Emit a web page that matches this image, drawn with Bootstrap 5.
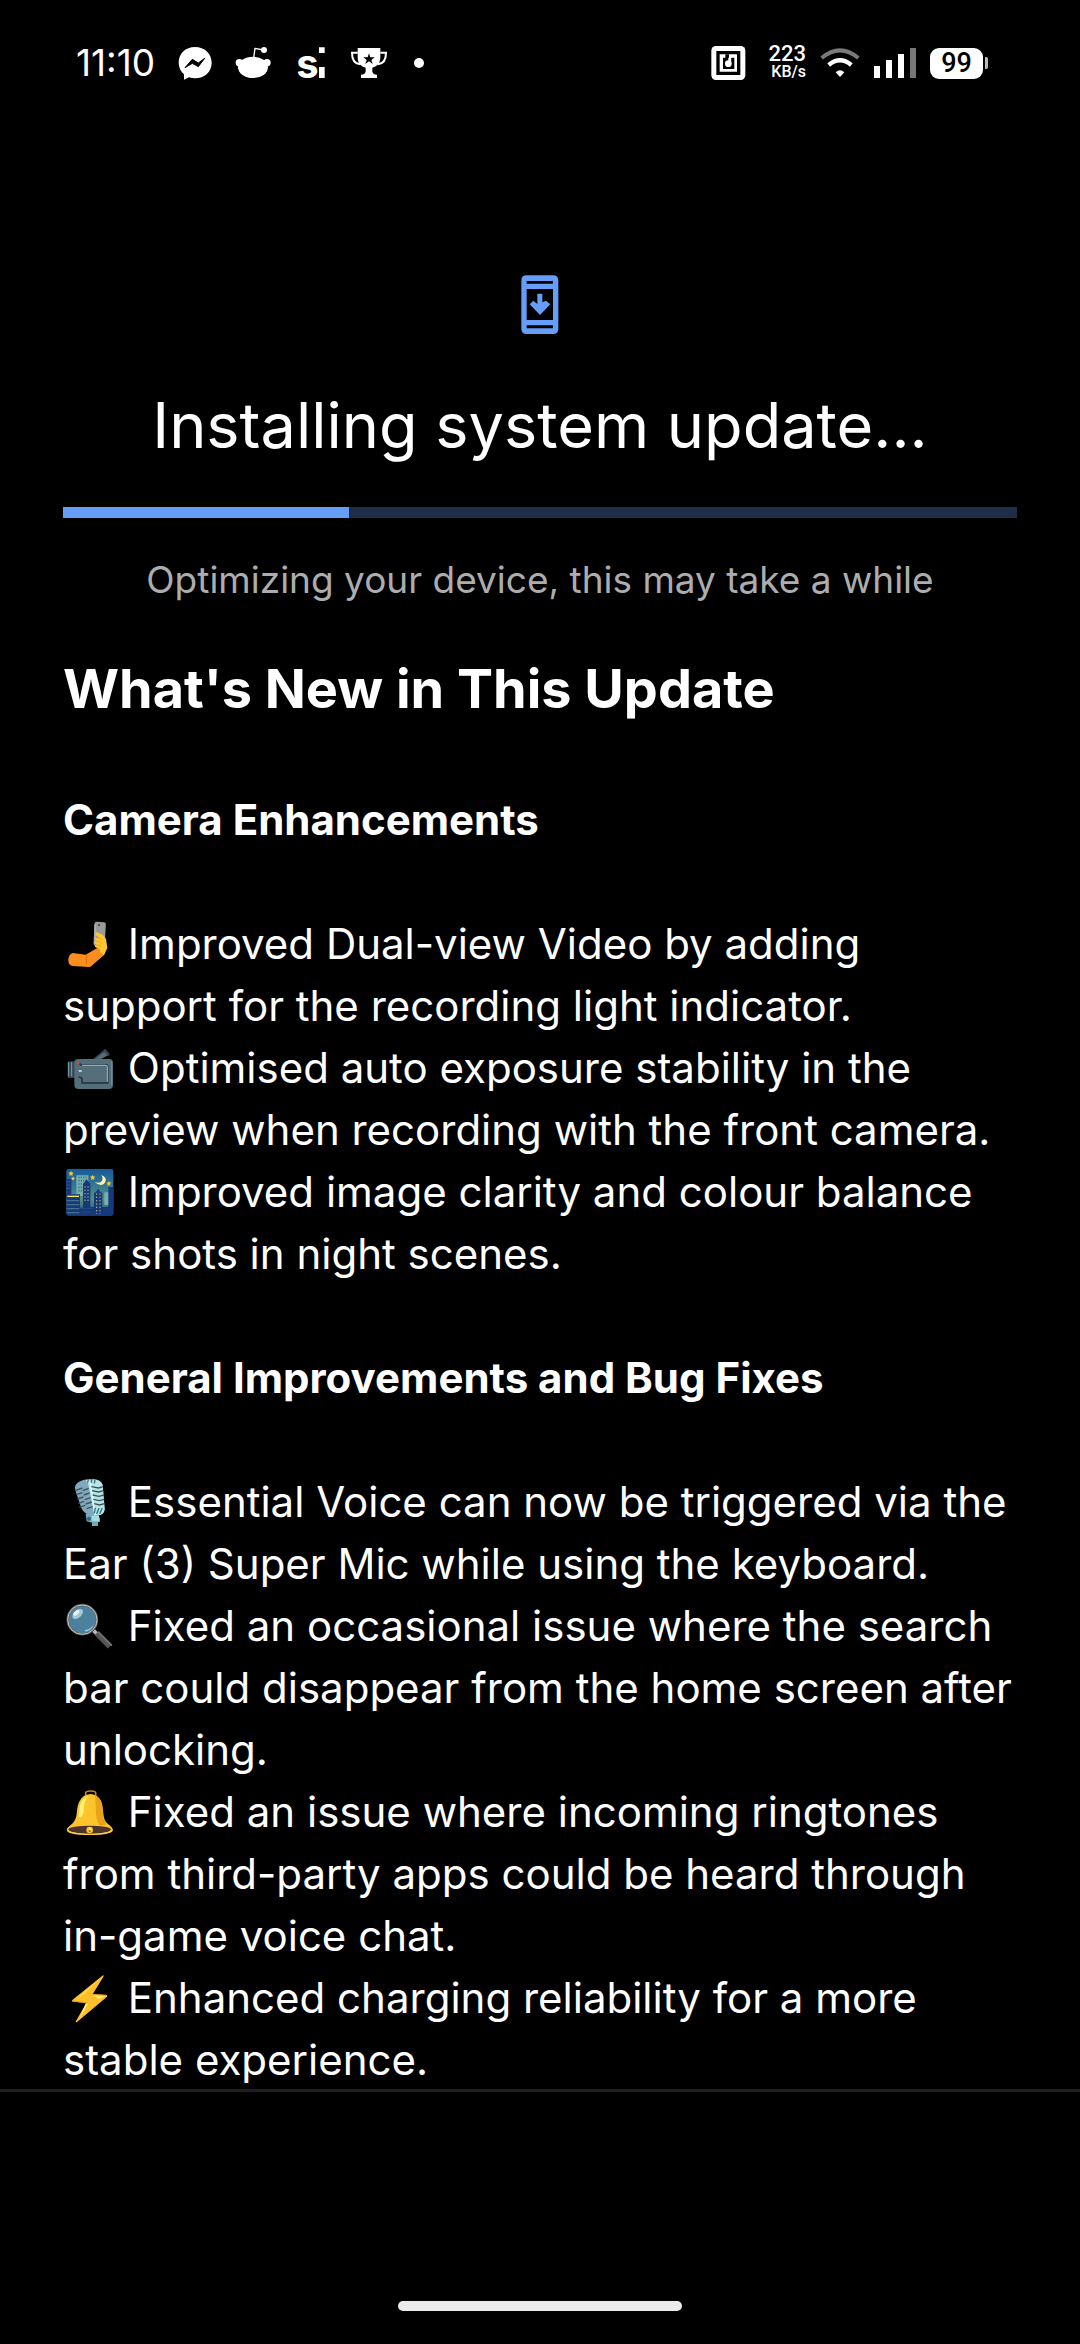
<!DOCTYPE html>
<html lang="en">
<head>
<meta charset="utf-8">
<meta name="viewport" content="width=device-width, initial-scale=1">
<title>System update</title>
<link href="https://cdn.jsdelivr.net/npm/bootstrap@5.3.0/dist/css/bootstrap.min.css" rel="stylesheet">
<style>
  body { background: #000; color: #fff; font-family: Inter, "Noto Sans", sans-serif; }
  svg { flex: none; overflow: visible; }
  .status-bar { height: 126px; padding: 0 92px 0 76px; }
  .status-left { gap: 22px; }
  .status-right { gap: 14px; }
  .clock { font-size: 37px; line-height: 44px; }
  .net-speed { font-family: Roboto, sans-serif; font-weight: 500; font-size: 16px; line-height: 18px; margin-left: 8px; }
  .net-speed .rate { font-size: 22px; }
  .battery-level { font-family: Roboto, sans-serif; font-weight: 500; font-size: 27px; line-height: 31px; width: 53px; height: 31px; border-radius: 9px; background: #fff; color: #000; }
  .battery-tip { width: 3px; height: 12px; margin-left: 2px; background: #bbb; border-radius: 0 2px 2px 0; }
  .updater { padding: 148px 63px 0; min-height: 0; }
  .update-title { font-size: 63px; line-height: 76px; font-weight: 400; margin: 53px 0 44px; }
  .progress { --bs-progress-height: 11px; --bs-progress-bg: #1f2d48; --bs-progress-bar-bg: #669df6; --bs-progress-border-radius: 0; }
  .update-note { font-size: 37px; line-height: 45px; color: #adadad; margin: 39px 0 54px; }
  .notes-title { font-size: 54px; line-height: 65px; font-weight: 700; margin: 0 0 68px; }
  .notes { font-size: 42px; line-height: 62px; }
  .notes h3 { font-size: 42px; line-height: 62px; font-weight: 700; margin: 0 0 62px; }
  .notes ul { margin: 0 0 62px; }
  .notes li svg { width: 48px; height: 48px; vertical-align: -10px; margin: 0 4px 0 1px; }
  .bottom-bar { height: 255px; border-top: 3px solid #202020; padding-bottom: 33px; }
  .home-handle { width: 284px; height: 10px; background: #ebebeb; }
</style>
<script src="https://cdn.jsdelivr.net/npm/bootstrap@5.3.0/dist/js/bootstrap.bundle.min.js"></script>
</head>
<body class="d-flex flex-column vh-100 overflow-hidden">

<header class="status-bar d-flex align-items-center justify-content-between flex-shrink-0">
  <div class="status-left d-flex align-items-center">
    <span class="clock">11:10</span>
    <!-- messenger -->
    <svg width="36" height="36" viewBox="351 45 108 108" fill="#fff"><path d="M405 51c-29 0-49 20-49 47 0 14 6 26 16 35v16l15-7c6 2 12 3 18 3 29 0 50-20 50-47s-21-47-50-47Z"/><path d="M375 113l22-25 18 11 19-14-19 25-18-10Z" fill="#000" stroke="#000" stroke-width="3" stroke-linejoin="round"/></svg>
    <!-- reddit -->
    <svg width="36" height="36" viewBox="525 45 108 108" fill="#fff"><ellipse cx="579" cy="112" rx="45" ry="32"/><circle cx="538" cy="98" r="11"/><circle cx="621" cy="98" r="11"/><circle cx="612" cy="60" r="9"/><path d="M581 84l4-29 25 5" fill="none" stroke="#fff" stroke-width="4" stroke-linejoin="round"/></svg>
    <!-- si -->
    <svg width="36" height="36" viewBox="699 45 108 108" fill="#fff"><text x="709" y="145" font-family="Inter, sans-serif" font-size="120" font-weight="700">s</text><path d="M777 52h17v17h-17zM777 111h17v33h-17z"/></svg>
    <!-- trophy -->
    <svg width="36" height="36" viewBox="873 45 108 108"><path d="M893 68h-17c0 23 8 33 24 35M961 68h17c0 23-8 33-24 35" fill="none" stroke="#fff" stroke-width="6"/><path d="M893 54h68v26c0 20-8 28-24 33v12c2 6 6 9 14 9v10h-48v-10c8 0 12-3 14-9v-12c-16-5-24-13-24-33Z" fill="#fff"/><path d="M927 70l4 12h13l-10 8 4 12-11-8-11 8 4-12-10-8h13Z" fill="#000"/></svg>
    <svg width="20" height="20" viewBox="0 0 20 20"><circle cx="10" cy="10" r="5" fill="#fff"/></svg>
  </div>
  <div class="status-right d-flex align-items-center">
    <!-- nfc -->
    <svg width="35" height="34" viewBox="71 48 105 102"><rect x="72" y="48" width="102" height="102" rx="14" fill="#fff"/><path d="M92 68h62v62H92z" fill="none" stroke="#000" stroke-width="10"/><path d="M107 83h7V73h11v10h-2v12h6V83h12v34h-34Z" fill="#000"/><circle cx="123" cy="101" r="10" fill="#fff"/><path d="M128 103V84q0-5 6-5" fill="none" stroke="#fff" stroke-width="7"/></svg>
    <div class="net-speed text-end"><div class="rate">223</div><div>KB/s</div></div>
    <!-- wifi -->
    <svg width="40" height="30" viewBox="393 54 120 90" fill="none"><path d="M398 84Q453 38 508 84" stroke="#7a7a7a" stroke-width="12"/><path d="M419 105Q453 77 487 105" stroke="#fff" stroke-width="13"/><path d="M440 127Q453 114 466 127L453 141Z" fill="#fff"/></svg>
    <!-- signal -->
    <svg width="42" height="32" viewBox="555 51 126 96" fill="#fff"><path d="M555 108h18v36h-18zM591 90h18v54h-18zM627 72h18v72h-18z"/><path d="M663 54h18v90h-18z" fill="#777"/></svg>
    <div class="d-flex align-items-center"><span class="battery-level text-center">99</span><span class="battery-tip"></span></div>
  </div>
</header>

<main class="updater flex-grow-1 overflow-hidden">
  <section class="text-center">
    <svg class="d-block mx-auto" width="40" height="60" viewBox="89 42 120 180"><path fill="#669df6" fill-rule="evenodd" d="M109 46h79q16 0 16 16v144q0 16-16 16h-79q-16 0-16-16V62q0-16 16-16ZM109 63v8h79v-8ZM109 87v93h79V87ZM109 196v9h79v-9Z"/><path d="M141 101h15v26l11-5 13 11-31 32-31-32 11-11 12 10Z" fill="#669df6"/></svg>
    <h1 class="update-title">Installing system update...</h1>
    <div class="progress" role="progressbar" aria-label="Update progress" aria-valuenow="30" aria-valuemin="0" aria-valuemax="100"><div class="progress-bar" style="width:30%"></div></div>
    <p class="update-note">Optimizing your device, this may take a while</p>
  </section>

  <article class="notes">
    <h2 class="notes-title">What's New in This Update</h2>
    <h3>Camera Enhancements</h3>
    <ul class="list-unstyled">
      <li><svg viewBox="40 33 144 144"><g><rect x="130" y="36" width="34" height="72" rx="6" fill="#999" transform="rotate(3 147 72)"/><path d="M133 43v58" stroke="#c4c4c4" stroke-width="3"/><circle cx="145" cy="45" r="3" fill="#333"/><path d="M67 129l38 5 44-25 12 25-38 33q-3 4-9 4l-48-3q-14-2-13-20 2-16 14-19Z" fill="#fb8c20"/><path d="M108 137q-3 12 0 25" fill="none" stroke="#d96b12" stroke-width="3"/><path d="M137 67q20 4 29 20l4 27-10 22-12-8v-10l-15-7q-3-5 4-8-8-3-5-8l6-3q-8-4-4-9l12 1-10-8q-4-5 1-9Z" fill="#fdc52f"/><path d="M139 83q9 0 16 7M138 94q9-1 15 7M138 105q9-1 13 7" fill="none" stroke="#e59a1a" stroke-width="2"/></g></svg> Improved Dual-view Video by adding support for the recording light indicator.</li>
      <li><svg viewBox="40 405 144 144"><path d="M126 448l31-26 6-6 14 15-3 6-16 3-12 10Z" fill="#37474f"/><path d="M134 446l27-20 8 11-16 9Z" fill="#546e7a"/><rect x="51" y="454" width="25" height="50" rx="4" fill="#37474f"/><path d="M54 457v42M63 457v42" stroke="#78a6bd" stroke-width="3"/><rect x="71" y="447" width="116" height="90" rx="12" fill="#546e7a"/><path d="M83 457l8 8h76q4 0 4 4v50H94v-13l-10-6" fill="none" stroke="#2f3e46" stroke-width="6"/><path d="M94 466h71q5 0 5 5v44" fill="none" stroke="#82aec0" stroke-width="4"/><path d="M84 483h9" stroke="#a6d4e5" stroke-width="6"/><circle cx="83" cy="459" r="4" fill="#f44336"/><path d="M183 454v72" stroke="#6f93a5" stroke-width="3"/></svg> Optimised auto exposure stability in the preview when recording with the front camera.</li>
      <li><svg viewBox="40 777 144 144"><defs><linearGradient id="nightSky" x2="0" y2="1"><stop stop-color="#145b9b"/><stop offset=".65" stop-color="#538f86"/><stop offset="1" stop-color="#195280"/></linearGradient></defs><rect x="47" y="777" width="141" height="140" rx="7" fill="url(#nightSky)"/><path d="M77 796h36v62H77zM161 847h16v38h-16z" fill="#78afb0"/><path d="M83 802h27M83 812h27M83 822h27M83 832h27M83 842h27" stroke="#397b94" stroke-width="5" stroke-dasharray="4 3"/><path d="M47 807h15v46h26v40h9v-71l11-14 11 14v69h11v-42l6-3 6-10 7 10 6 3v42h18v-60h15v79q0 7-7 7H54q-7 0-7-7Z" fill="#173879"/><path d="M48 815h12M48 825h12M48 835h12" stroke="#487aa8" stroke-width="3" stroke-dasharray="3 3"/><path d="M103 829v47M112 829v47M138 850v62M148 850v62" stroke="#c4c478" stroke-width="3" stroke-dasharray="4 6"/><path d="M50 859h35" stroke="#fee25c" stroke-width="4"/><path d="M48 872h38M48 884h38M48 896h38M48 908h38" stroke="#446f90" stroke-width="4"/><path d="M88 895h38M91 906h30" stroke="#284a86" stroke-width="3"/><path d="M152 795q20 9 11 23-12 15-31-2 17 6 22-4 4-7-2-17Z" fill="#fff3ae"/><path d="M61 782l2 5 6 1-4 4 1 6-5-3-5 3 1-6-4-4 6-1ZM67 799l2 4 4 1-3 3v4l-3-2-4 2 1-4-3-3 4-1ZM126 794l2 5 6 1-4 4 1 6-5-3-5 3 1-6-4-4 6-1ZM175 813l2 4 5 1-4 4 1 5-4-2-5 2 1-5-3-4 5-1Z" fill="#fdc52f"/></svg> Improved image clarity and colour balance for shots in night scenes.</li>
    </ul>
    <h3>General Improvements and Bug Fixes</h3>
    <ul class="list-unstyled">
      <li><svg viewBox="40 57 144 144"><path d="M105 162h31l12 12v12h-6v12h-18v-10l-16-4Z" fill="#70a9bc"/><path d="M123 166h22v18h-22z" fill="#a5dce6"/><circle cx="115" cy="176" r="6" fill="#246c7f"/><path d="M74 91q-5-16 10-25 14-9 39-9 28 0 33 18l6 73q-2 18-22 18-38 3-48-22Z" fill="#81a9bd"/><path d="M110 60q40-7 46 15l6 73q-2 18-22 18h-9Z" fill="#b4e5e9"/><path d="M107 62q10 1 14 17l12 85" fill="none" stroke="#dff7f8" stroke-width="5"/><path d="M75 91l20-7M77 104l18-6M80 117l18-6M83 130l18-6M86 142l18-6M96 92l18-7M99 105l18-6M102 119l18-6M105 132l18-6M108 146l18-6M122 80l22 4 13-4M124 92l20 4 14-4M126 105l19 4 15-4M128 118l18 4 15-4M130 131l17 4 14-4" fill="none" stroke="#43525b" stroke-width="4"/><path d="M113 58l-2 10M123 57l-1 11M133 58l-2 12M134 143l-3 17M145 144l-7 18M155 144l-8 17" stroke="#357281" stroke-width="4"/></svg> Essential Voice can now be triggered via the Ear (3) Super Mic while using the keyboard.</li>
      <li><svg viewBox="40 429 144 144"><path d="M129 512l10 10" stroke="#bcbcbc" stroke-width="11"/><path d="M138 519l40 40" stroke="#555" stroke-width="18"/><path d="M142 516l42 41" stroke="#777" stroke-width="4"/><circle cx="95" cy="479" r="44" fill="#4b819d" stroke="#5d5d5d" stroke-width="7"/><circle cx="95" cy="479" r="44" fill="none" stroke="#c8c2bd" stroke-width="3"/><ellipse cx="81" cy="462" rx="19" ry="11" fill="#a5c8d9" transform="rotate(-42 81 462)"/><ellipse cx="77" cy="458" rx="11" ry="6" fill="#e7f2f5" transform="rotate(-42 77 458)"/><path d="M100 510q21-1 29-18-3 18-22 23Z" fill="#8fc2dc"/></svg> Fixed an occasional issue where the search bar could disappear from the home screen after unlocking.</li>
      <li><svg viewBox="40 -3 144 144"><path d="M105 18V9q0-6 15-6t15 6v9" fill="none" stroke="#c98913" stroke-width="5"/><path d="M119 12q-23 2-32 21-7 11-9 39-2 22-18 33-12 9-12 16 3 13 69 14 67-1 70-14 0-8-15-19-12-8-14-31-2-34-10-43-9-14-29-16Z" fill="#fdc42b"/><path d="M132 15q13 5 18 19 6 16 7 42 2 17 10 28l-18 3q-11-9-13-34-1-45-4-58Z" fill="#e8a31a"/><path d="M113 19q-22 7-26 32l-3 29q14 4 15-16 1-33 14-45Z" fill="#fff176"/><ellipse cx="117" cy="119" rx="64" ry="12" fill="#4e342e"/><path d="M52 122q11 11 65 11t65-11" fill="none" stroke="#ffcf45" stroke-width="4"/><circle cx="117" cy="120" r="10" fill="#fdc42b"/><circle cx="119" cy="117" r="4" fill="#ffef75"/><circle cx="117" cy="123" r="3" fill="#9b661e"/></svg> Fixed an issue where incoming ringtones from third-party apps could be heard through in-game voice chat.</li>
      <li><svg viewBox="40 555 144 144"><path d="M157 556l-92 74q-3 4 1 5l41 3-32 57q2 3 5 0l89-75q3-4-1-5l-42-2 33-54q1-3-2-3Z" fill="#fdc02b"/><path d="M153 562l-50 46-26 20ZM106 638l6 3-26 46 20-49ZM129 616l36 3-22 7Z" fill="#fff176"/><path d="M126 613l42 3M67 633l43 6" stroke="#ed9b16" stroke-width="3"/></svg> Enhanced charging reliability for a more stable experience.</li>
    </ul>
  </article>
</main>

<footer class="bottom-bar d-flex align-items-end justify-content-center flex-shrink-0">
  <div class="home-handle rounded-pill"></div>
</footer>
</body>
</html>
